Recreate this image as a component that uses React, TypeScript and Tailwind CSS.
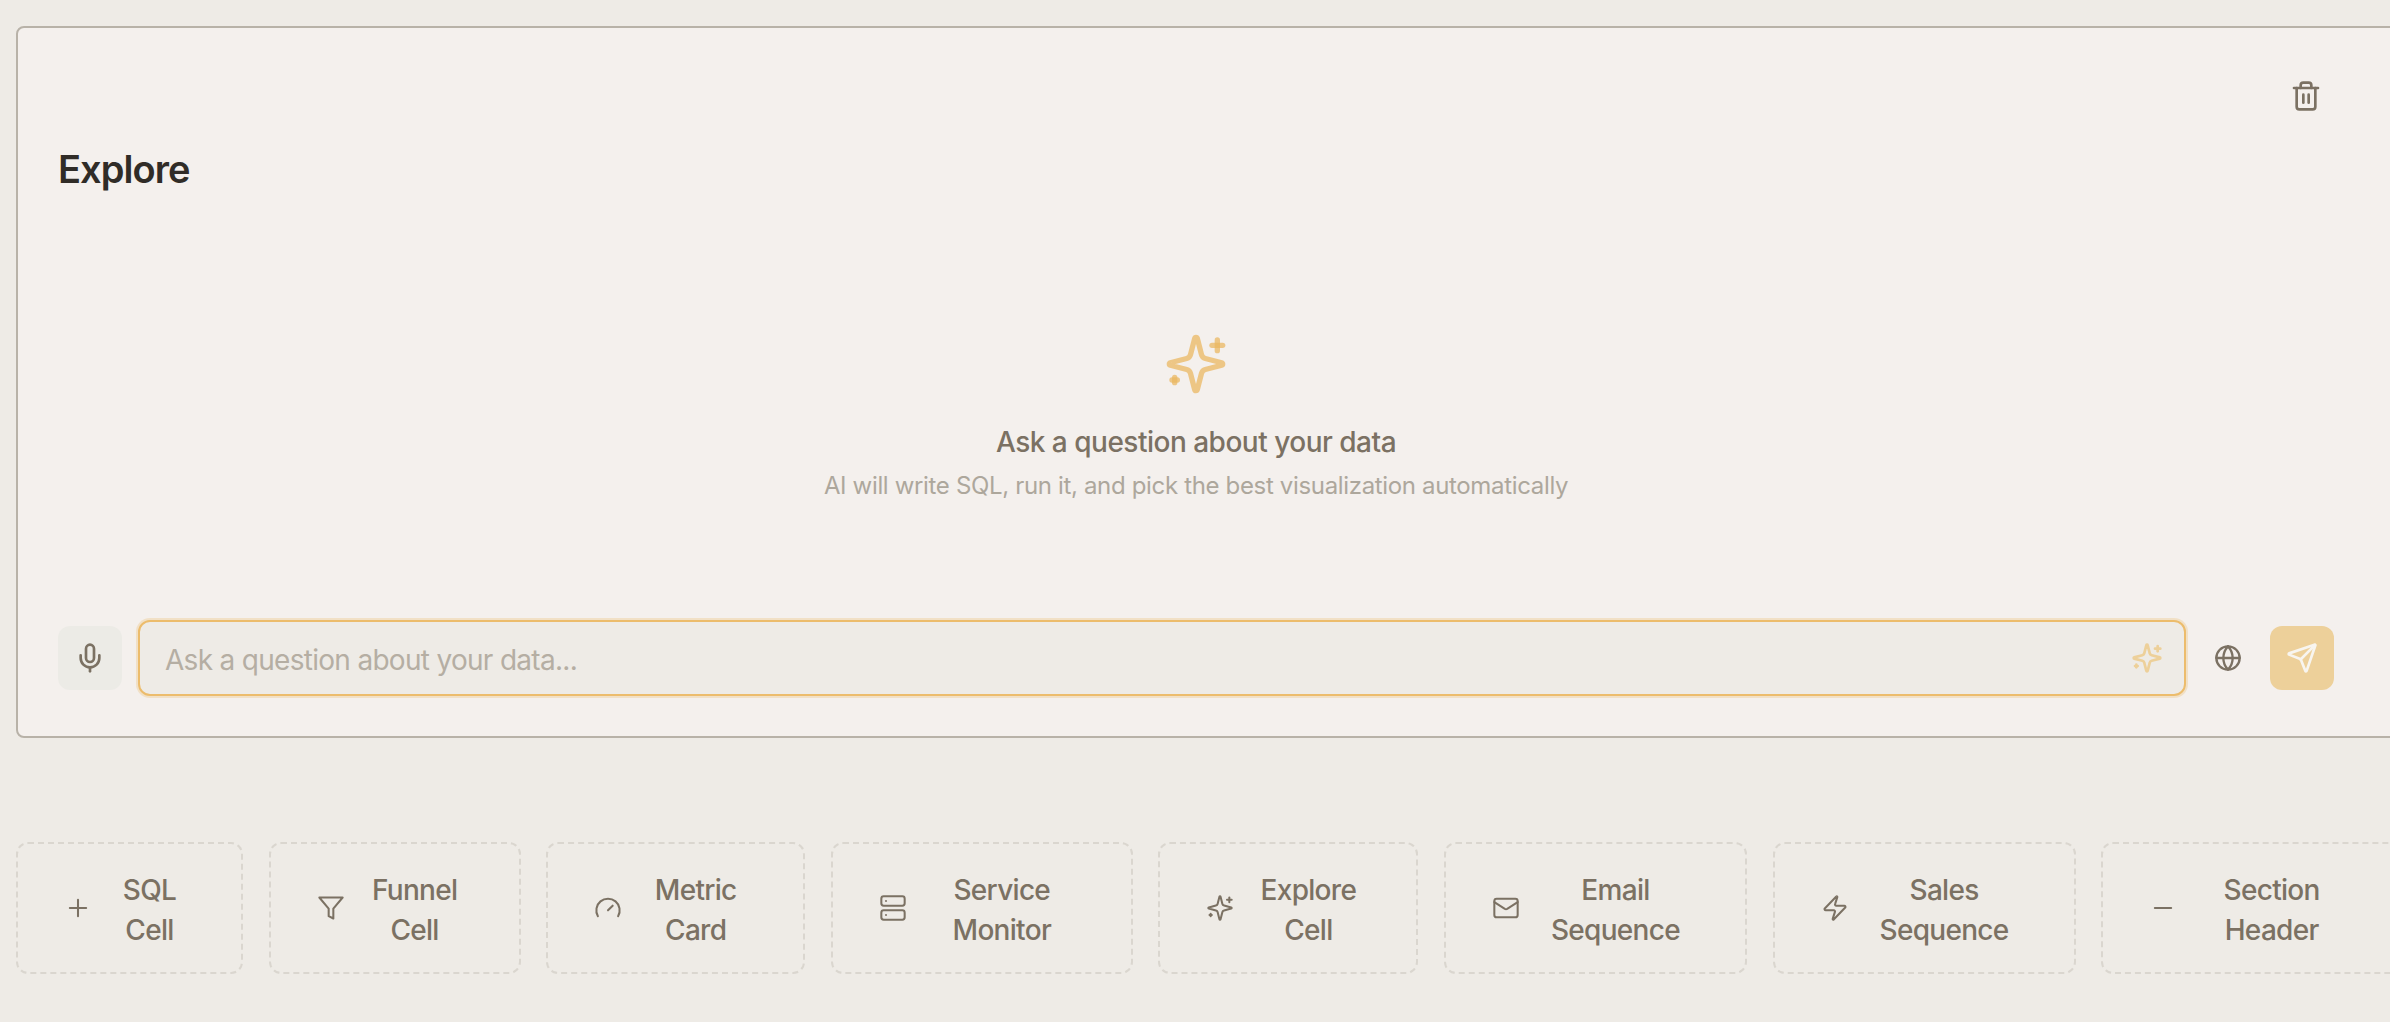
// Explore panel with the row of "add cell" buttons underneath.
import { Gauge, Globe, Mail, Mic, Minus, Plus, Send, Server, Trash2, Zap } from 'lucide-react';

const FONT = 'font-[Inter,"Liberation_Sans",sans-serif]';

// lucide's older sparkles shape, drawn by hand so the overlap of the small plus stays visible
const Sparkle = ({ className, stroke, strokeWidth = 2 }: { className: string; stroke: string; strokeWidth?: number }) => (
  <svg viewBox="0 0 24 24" fill="none" stroke={stroke} strokeWidth={strokeWidth} strokeLinecap="round" strokeLinejoin="round" className={className} aria-hidden>
    <path d="M9.937 15.5A2 2 0 0 0 8.5 14.063l-6.135-1.582a.5.5 0 0 1 0-.962L8.5 9.936A2 2 0 0 0 9.937 8.5l1.582-6.135a.5.5 0 0 1 .963 0L14.063 8.5A2 2 0 0 0 15.5 9.937l6.135 1.581a.5.5 0 0 1 0 .964L15.5 14.063a2 2 0 0 0-1.437 1.437l-1.582 6.135a.5.5 0 0 1-.963 0z" />
    <path d="M20 3v4" />
    <path d="M22 5h-4" />
    <path d="M4 17v2" />
    <path d="M5 18H3" />
  </svg>
);

const FunnelIcon = ({ className, strokeWidth }: { className: string; strokeWidth: number }) => (
  <svg viewBox="0 0 24 24" fill="none" stroke="currentColor" strokeWidth={strokeWidth} strokeLinecap="round" strokeLinejoin="round" className={className} aria-hidden>
    <polygon points="22 3 2 3 10 12.46 10 19 14 21 14 12.46 22 3" />
  </svg>
);

const iconClass = 'h-7 w-7 shrink-0';
const iconStroke = 1.75;

const cells = [
  { top: 'SQL', bottom: 'Cell', width: 'w-[227px]', icon: <Plus className={iconClass} strokeWidth={iconStroke} /> },
  { top: 'Funnel', bottom: 'Cell', width: 'w-[252px]', icon: <FunnelIcon className={iconClass} strokeWidth={iconStroke} /> },
  { top: 'Metric', bottom: 'Card', width: 'w-[259px]', icon: <Gauge className={iconClass} strokeWidth={iconStroke} /> },
  { top: 'Service', bottom: 'Monitor', width: 'w-[302px]', icon: <Server className={iconClass} strokeWidth={iconStroke} /> },
  { top: 'Explore', bottom: 'Cell', width: 'w-[260px]', icon: <Sparkle className={iconClass} stroke="currentColor" strokeWidth={iconStroke} /> },
  { top: 'Email', bottom: 'Sequence', width: 'w-[303px]', icon: <Mail className={iconClass} strokeWidth={iconStroke} /> },
  { top: 'Sales', bottom: 'Sequence', width: 'w-[303px]', icon: <Zap className={iconClass} strokeWidth={iconStroke} /> },
  { top: 'Section', bottom: 'Header', width: 'w-[301px]', icon: <Minus className={iconClass} strokeWidth={iconStroke} /> },
];

export default function App() {
  return (
    <div className={`${FONT} h-[1022px] w-[2390px] overflow-hidden bg-[#eeebe6] pl-4 pt-[26px]`}>
      <section className="flex h-[712px] w-[2400px] flex-col rounded-lg border-2 border-[#b8b2a8] bg-[#f4f0ed] pb-10 pl-10 pr-[80px]">
        <div className="flex justify-end pr-3 pt-[52px]">
          <button className="text-[#7b7163]" aria-label="Delete">
            <Trash2 className="block h-8 w-8" />
          </button>
        </div>
        <h2 className="mt-[29px] text-[38px] font-semibold leading-[56px] tracking-[-0.95px] text-[#302c27]">Explore</h2>

        <div className="mt-[135px] flex flex-col items-center">
          <Sparkle className="h-16 w-16" stroke="#ebb75fbb" />
          <p className="mt-[26px] text-[28px] font-medium leading-10 tracking-[-0.5px] text-[#7b7163]">Ask a question about your data</p>
          <p className="mt-2 text-2xl leading-8 tracking-[-0.34px] text-[#ada79c]">AI will write SQL, run it, and pick the best visualization automatically</p>
        </div>

        <div className="mt-auto flex items-center">
          <button className="flex h-16 w-16 shrink-0 items-center justify-center rounded-xl bg-[#ecebe6] text-[#7b7163]" aria-label="Voice">
            <Mic className="h-8 w-8" />
          </button>
          <div className="ml-4 flex h-[76px] w-[2048px] items-center rounded-xl border-2 border-[#ecbc6c] bg-[#eeebe6] pl-[25px] pr-[21px] ring-2 ring-[#ecbc6c]/30">
            <span className="flex-1 pt-1 text-[28px] tracking-[-0.7px] text-[#b5aea3]">Ask a question about your data...</span>
            <Sparkle className="h-8 w-8" stroke="#edd09a" />
          </div>
          <button className="ml-7 text-[#7b7163]" aria-label="Web search">
            <Globe className="block h-7 w-7" />
          </button>
          <button className="ml-7 flex h-16 w-16 shrink-0 items-center justify-center rounded-xl bg-[#edd09a] text-[#f8f5ef]" aria-label="Send">
            <Send className="h-8 w-8" />
          </button>
        </div>
      </section>

      <div className="mt-[104px] flex gap-[25.6px]">
        {cells.map((cell) => (
          <button
            key={cell.top + cell.bottom}
            className={`${cell.width} flex h-[132px] shrink-0 items-center gap-3 rounded-xl border-2 border-dashed border-[#dad6cf] px-[46px] text-[28px] font-[450] leading-10 tracking-[-0.7px] text-[#7b7163]`}
          >
            {cell.icon}
            <span className="flex-1 pt-[3px] text-center">
              {cell.top}
              <br />
              {cell.bottom}
            </span>
          </button>
        ))}
      </div>
    </div>
  );
}
